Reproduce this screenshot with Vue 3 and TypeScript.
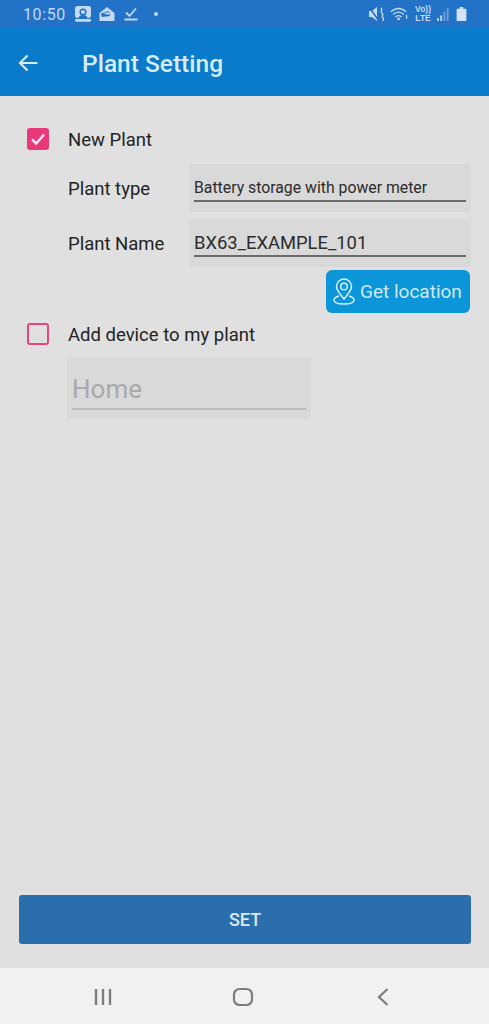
<script setup lang="ts">
const plantType: string = 'Battery storage with power meter'
const plantName: string = 'BX63_EXAMPLE_101'
</script>

<template>
  <div class="screen">
    <div class="status">
      <div class="status-left">
        <span class="time">10:50</span>
        <svg class="si first-icon" viewBox="0 0 18 18" width="18" height="18">
          <rect x="1" y="1" width="16" height="12" rx="2.500" fill="#c4d9f2" />
          <circle cx="9" cy="7" r="2.800" fill="none" stroke="#2272c8" stroke-width="1.500" />
          <path d="M4.500 13c.5-2 2-3 4.500-3s4 1 4.500 3z" fill="#2272c8" />
          <rect x="1" y="14" width="16" height="2.800" rx="1.200" fill="#c4d9f2" />
        </svg>
        <svg class="si" viewBox="0 0 18 18" width="18" height="18">
          <path d="M1.500 8 9 2l7.500 6v8h-15z" fill="#c4d9f2" />
          <path d="M3 8.500 11 6l1 5-8 1z" fill="#2272c8" />
          <path d="M5 8.800 10.800 7l.5 2.800z" fill="#c4d9f2" />
        </svg>
        <svg class="si" viewBox="0 0 18 18" width="18" height="18">
          <path d="M4 7.500 7.500 11 14 3.500" fill="none" stroke="#c4d9f2" stroke-width="1.800" />
          <path d="M2.500 14.500h13" stroke="#c4d9f2" stroke-width="2" />
        </svg>
        <span class="dot"></span>
      </div>
      <div class="status-right">
        <svg viewBox="0 0 16 18" width="16" height="18">
          <path d="M1 6h3l5-4v14l-5-4H1z" fill="#c4d9f2" />
          <path d="M1 2l10 14" stroke="#2272c8" stroke-width="1.500" />
          <path d="M13 3c2 2-1 3 1 5s-1 3 1 5-1 2 0 3" fill="none" stroke="#c4d9f2" stroke-width="1.400" />
        </svg>
        <svg viewBox="0 0 20 18" width="18" height="16">
          <path d="M1 6.500c5-5 12-5 17 0M3.500 9.500c3.500-3.500 8.500-3.500 12 0M6 12.300c2-2 5-2 7 0" fill="none" stroke="#c4d9f2" stroke-width="1.600" />
          <circle cx="9.500" cy="14.500" r="1.500" fill="#c4d9f2" />
          <path d="M18.500 10v4.500" stroke="#c4d9f2" stroke-width="1.500" />
        </svg>
        <span class="volte"><span>Vo))</span><span>LTE</span></span>
        <svg viewBox="0 0 14 16" width="13" height="15">
          <rect x="0" y="12" width="2" height="3" fill="#c4d9f2" />
          <rect x="3.500" y="9" width="2" height="6" fill="#c4d9f2" />
          <rect x="7" y="5" width="2" height="10" fill="#6f9fdb" />
          <rect x="10.500" y="1" width="2" height="14" fill="#6f9fdb" />
        </svg>
        <svg viewBox="0 0 12 18" width="11" height="16">
          <path d="M4 1h4v2h2.500a1 1 0 0 1 1 1v12a1 1 0 0 1-1 1h-9a1 1 0 0 1-1-1V4a1 1 0 0 1 1-1H4z" fill="#d3e3f6" />
        </svg>
      </div>
    </div>

    <header class="appbar">
      <svg class="back" viewBox="0 0 20 18" width="20" height="18">
        <path d="M19.500 9H2M9.500 1.500 2 9l7.500 7.500" fill="none" stroke="#d8ebf8" stroke-width="2.200" />
      </svg>
      <h1 class="title">Plant Setting</h1>
    </header>

    <main class="content">
      <div class="check-row">
        <span class="check on">
          <svg viewBox="0 0 22 22" width="22" height="22">
            <path d="M5 11.500 9.300 15.500 17 6.500" fill="none" stroke="#fbe9f0" stroke-width="2.400" />
          </svg>
        </span>
        <span class="label">New Plant</span>
      </div>

      <div class="field-row first">
        <span class="label">Plant type</span>
        <div class="field"><span class="field-small">{{ plantType }}</span></div>
      </div>
      <div class="field-row second">
        <span class="label">Plant Name</span>
        <div class="field"><span class="field-value">{{ plantName }}</span></div>
      </div>

      <div class="loc-row">
        <button class="loc" type="button">
          <svg viewBox="0 0 24 30" width="24" height="30">
            <path d="M12 22C8 17 4.500 13.500 4.500 9.500a7.500 7.500 0 0 1 15 0C19.500 13.500 16 17 12 22z" fill="none" stroke="#d5eef9" stroke-width="1.500" />
            <circle cx="12" cy="9.500" r="3.300" fill="none" stroke="#d5eef9" stroke-width="1.500" />
            <path d="M7 19c-3 .8-5 2.300-5 4 0 2.500 4.500 4 10 4s10-1.500 10-4c0-1.700-2-3.200-5-4" fill="none" stroke="#d5eef9" stroke-width="1.500" />
          </svg>
          <span>Get location</span>
        </button>
      </div>

      <div class="check-row add">
        <span class="check"></span>
        <span class="label">Add device to my plant</span>
      </div>

      <div class="home"><span>Home</span></div>
    </main>

    <div class="set-wrap">
      <button class="set" type="button">SET</button>
    </div>

    <nav class="nav">
      <svg viewBox="0 0 20 20" width="20" height="20">
        <path d="M3 2v16M10 2v16M17 2v16" stroke="#7d7d7d" stroke-width="2.400" />
      </svg>
      <svg class="nav-home" viewBox="0 0 22 20" width="22" height="20">
        <rect x="2" y="2" width="18" height="16" rx="5.500" fill="none" stroke="#7d7d7d" stroke-width="2.200" />
      </svg>
      <svg viewBox="0 0 14 20" width="14" height="20">
        <path d="M11.500 2 3 10l8.500 8" fill="none" stroke="#7d7d7d" stroke-width="2.200" />
      </svg>
    </nav>
  </div>
</template>

<style>
html, body { margin: 0; background: #e0e0e0; }
</style>

<style scoped>
.screen {
  width: 489px;
  height: 1024px;
  display: flex;
  flex-direction: column;
  overflow: hidden;
  background: #e0e0e0;
  font-family: Roboto, "Liberation Sans", sans-serif;
  color: #232323;
}
.status {
  height: 28px;
  flex: none;
  background: #2272c8;
  display: flex;
  justify-content: space-between;
  align-items: center;
  padding: 0 22px 0 23px;
  box-sizing: border-box;
}
.status-left, .status-right { display: flex; align-items: center; }
.status-left { gap: 6px; }
.status-right { gap: 6px; }
.time { font-size: 16px; color: #c4d9f2; letter-spacing: 0.6px; }
.si { display: block; }
.first-icon { margin-left: 2px; }
.dot { width: 4px; height: 4px; border-radius: 50%; background: #c4d9f2; margin-left: 8px; }
.volte {
  display: flex;
  flex-direction: column;
  margin-left: 1px;
  font-size: 8.5px;
  line-height: 9px;
  font-weight: 700;
  color: #c4d9f2;
  font-family: "Liberation Sans", sans-serif;
  text-align: center;
}
.appbar {
  height: 68px;
  flex: none;
  background: #0a7aca;
  display: flex;
  align-items: center;
  padding: 0 0 0 18px;
  box-sizing: border-box;
}
.back { display: block; margin: 2px 44px 0 0; }
.title {
  margin: 2px 0 0;
  font-size: 24.5px;
  font-weight: 500;
  color: #d8ebf8;
}
.content {
  flex: 1;
  padding: 32px 18px 0 27px;
  display: flex;
  flex-direction: column;
  box-sizing: border-box;
}
.check-row { display: flex; align-items: center; gap: 19px; height: 22px; }
.check {
  width: 22px;
  height: 22px;
  box-sizing: border-box;
  border: 2px solid #e6457f;
  border-radius: 3px;
  flex: none;
}
.check.on { background: #e8397a; border: 0; }
.check.on svg { display: block; }
.label { font-size: 18.5px; color: #232323; white-space: nowrap; padding-top: 2px; }
.field-row { display: flex; align-items: center; padding-left: 41px; }
.field-row .label { width: 121px; flex: none; }
.first { margin-top: 14px; height: 48px; }
.second { margin-top: 7px; height: 48px; }
.field {
  width: 282px;
  height: 48px;
  background: #d9d9d9;
  box-sizing: border-box;
  padding: 0 5px;
}
.field span {
  height: 38px;
  padding-top: 10px;
  box-sizing: border-box;
  border-bottom: 2px solid #6a6a6a;
  display: flex;
  align-items: center;
  color: #2c2c2c;
  white-space: nowrap;
}
.field-small { font-size: 15.8px; }
.field-value { font-size: 18.4px; }
.loc-row { display: flex; justify-content: flex-end; margin-top: 3px; padding-right: 1px; }
.loc {
  width: 144px;
  height: 43px;
  background: #0a96d8;
  border: 0;
  border-radius: 6px;
  display: flex;
  align-items: center;
  gap: 4px;
  padding: 0 0 0 6px;
  color: #cfe9f6;
  font-family: inherit;
  font-size: 19px;
}
.loc svg { flex: none; }
.add { margin-top: 10px; }
.home {
  margin: 13px 0 0 40px;
  width: 244px;
  height: 61px;
  background: #d9d9d9;
  box-sizing: border-box;
  padding: 0 5px;
}
.home span {
  display: flex;
  align-items: flex-end;
  height: 52px;
  padding-bottom: 4px;
  box-sizing: border-box;
  border-bottom: 2px solid #bdbdbd;
  font-size: 26px;
  line-height: 30px;
  color: #a9a9a9;
}
.set-wrap { flex: none; padding: 0 18px 24px 19px; }
.set {
  width: 100%;
  height: 49px;
  display: block;
  background: #2b6ead;
  border: 0;
  border-radius: 3px;
  color: #dce9f4;
  font-family: inherit;
  font-size: 18px;
  font-weight: 500;
}
.nav {
  height: 56px;
  flex: none;
  background: #f1f1f1;
  display: flex;
  align-items: center;
  justify-content: space-between;
  padding: 0 99px 0 93px;
  box-sizing: border-box;
}
.nav svg { display: block; margin-top: 2px; }
.nav .nav-home { margin-left: -4px; }
</style>
